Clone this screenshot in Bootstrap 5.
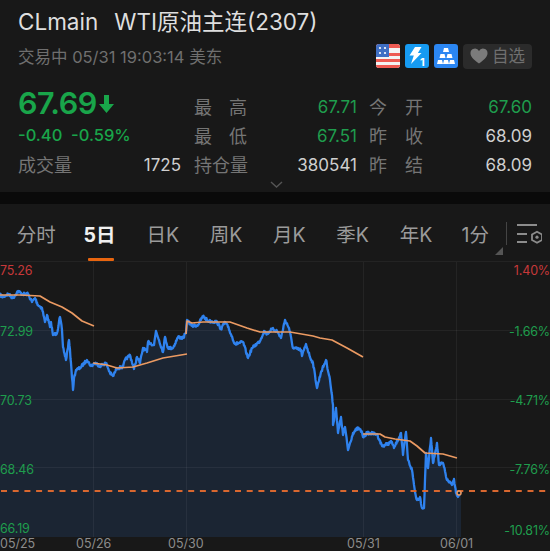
<!DOCTYPE html>
<html lang="zh">
<head>
  <meta charset="UTF-8" />
  <title>CLmain</title>
  <meta name="viewport" content="width=device-width, initial-scale=1" />
  <link href="https://cdn.jsdelivr.net/npm/bootstrap@5.3.0/dist/css/bootstrap.min.css" rel="stylesheet" />
  <style>
    body {
      font-family: Inter, "Noto Sans CJK SC", sans-serif;
      background-color: #181818;
      color: #d4d4d4;
      height: 551px;
      overflow: hidden;
    }
    .quote-head { height: 192px; padding: 0 18px; position: relative; }
    .quote-title { height: 42px; padding-top: 7px; font-size: 22.5px; line-height: 30px; color: #dedede; white-space: nowrap; }
    .quote-title .code { margin-right: 16px; }
    .quote-status { height: 30px; font-size: 16.5px; color: #6f6f6f; }
    .tag-group { gap: 5px; margin-top: -2px; }
    .tag-btn { width: 69px; height: 25px; background: #2b2b2b; border-radius: 4px; color: #6f6f6f; font-size: 16.5px; }
    .quote-grid { display: grid; grid-template-columns: 163px 13px 53px 110px 12px 54px 109px; grid-auto-rows: 29px; margin-top: 21px; font-size: 17px; align-items: center; }
    .price { font-size: 30.5px; font-weight: 600; color: #19a54a; line-height: 1; margin-top: -8px; letter-spacing: -.5px; }
    .price svg { margin-left: 2px; }
    .change { font-size: 16.5px; font-weight: 500; color: #19a54a; margin-top: -2px; }
    .lbl { color: #757575; font-size: 18px; }
    .num { text-align: right; color: #cfcfcf; }
    .up { color: #1f9d4d; }
    .expand-mark { position: absolute; left: 270px; top: 181px; }
    .band { height: 12px; background: #0a0a0a; }
    .tabs-bar { height: 58px; border-bottom: 1px solid #232323; position: relative; font-size: 19.5px; color: #9b9b9b; padding: 5px 0 0 4.500px; }
    .tab-item { width: 63.3px; text-align: center; line-height: 28px; white-space: nowrap; position: relative; }
    .tab-item.last { width: 55.500px; }
    .tab-item.on { color: #f0f0f0; font-weight: 700; }
    .tab-item.on::after { content: ""; position: absolute; left: 20px; right: 17px; top: 37px; height: 3px; background: #e8650f; border-radius: 1px; }
    .tab-corner { position: absolute; left: 495px; top: 43px; width: 0; height: 0; border-left: 8px solid transparent; border-bottom: 8px solid #555; }
    .tab-sep { width: 1px; height: 23px; background: #444; margin: -3px 0 0 3px; }
    .tab-set { margin-left: 9px; }
    .chart-wrap { position: relative; height: 275px; }
    .chart-wrap svg { display: block; }
    .axis-lbl { position: absolute; font-size: 12.5px; letter-spacing: -.15px; line-height: 16px; white-space: nowrap; }
    .axis-lbl.lft { left: 0; }
    .axis-lbl.rgt { right: 0; }
    .axis-red { color: #c7383a; }
    .axis-green { color: #1f9d4d; }
    .lvl-1 { top: 1px; }
    .lvl-2 { top: 62px; }
    .lvl-3 { top: 131px; }
    .lvl-4 { top: 200px; }
    .lvl-5 { top: 261px; }
    .axis-lbl.lft.lvl-5 { top: 258.500px; }
    .date-row { position: relative; height: 14px; }
    .date-lbl { position: absolute; top: .5px; font-size: 12.5px; color: #8c8c8c; line-height: 12px; }
    .day-1 { left: 0; }
    .day-2 { left: 76px; }
    .day-3 { left: 168px; }
    .day-4 { left: 347px; }
    .day-5 { left: 440px; }
  </style>
</head>
<body>
  <div class="quote-head">
    <div class="quote-title"><span class="code">CLmain</span>WTI原油主连(2307)</div>
    <div class="quote-status d-flex align-items-center justify-content-between">
      <span>交易中 05/31 19:03:14 美东</span>
      <div class="tag-group d-flex align-items-center">
        <svg width="24" height="24" viewBox="0 0 24 24">
          <rect width="24" height="24" rx="3" fill="#f3f3f3"/>
          <path d="M0 3a3 3 0 0 1 3-3h18a3 3 0 0 1 3 3v1H0zM0 9h24v3H0zM0 15h24v3H0zM0 21h24a3 3 0 0 1-3 3H3a3 3 0 0 1-3-3z" fill="#ee5a52"/>
          <path d="M0 3a3 3 0 0 1 3-3h10v13H0z" fill="#3f6fc4"/>
          <g fill="#fff"><circle cx="4" cy="4" r="1.1"/><circle cx="9" cy="4" r="1.1"/><circle cx="4" cy="9" r="1.1"/><circle cx="9" cy="9" r="1.1"/></g>
        </svg>
        <svg width="24" height="24" viewBox="0 0 24 24">
          <rect width="24" height="24" rx="3" fill="#169bf2"/>
          <path d="M10 3h6.500l-3.600 6H16.500L6 20l2.800-8.500H4.500z" fill="#fff"/>
          <text x="15" y="22" font-size="11" font-weight="700" fill="#fff" font-family="Inter, sans-serif">1</text>
        </svg>
        <svg width="24" height="24" viewBox="0 0 24 24">
          <rect width="24" height="24" rx="3" fill="#2b86f2"/>
          <g fill="#fff">
            <path d="M10 4h4l1 4H9z"/>
            <path d="M6.500 10h4l1 4h-6zM13.500 10h4l1 4h-6z"/>
            <path d="M4 16h4l1 4H3zM10 16h4l1 4H9zM16 16h4l1 4h-6z"/>
          </g>
        </svg>
        <div class="tag-btn d-flex align-items-center justify-content-center gap-1">
          <svg width="18" height="16" viewBox="0 0 18 16"><path d="M9 15.500C3 11 .5 8.400.5 5.200A4.500 4.500 0 0 1 9 3a4.500 4.500 0 0 1 8.500 2.200C17.500 8.400 15 11 9 15.500z" fill="#7b7b7b"/></svg>
          <span>自选</span>
        </div>
      </div>
    </div>
    <div class="quote-grid">
      <div class="price d-flex align-items-center">67.69<svg width="15" height="18" viewBox="0 0 15 18"><path d="M5 0h5v9h5l-7.500 9L0 9h5z" fill="#19a54a"/></svg></div>
      <div></div>
      <div class="lbl d-flex justify-content-between"><span>最</span><span>高</span></div>
      <div class="num up">67.71</div>
      <div></div>
      <div class="lbl d-flex justify-content-between"><span>今</span><span>开</span></div>
      <div class="num up">67.60</div>

      <div class="change">-0.40&nbsp;&nbsp;-0.59%</div>
      <div></div>
      <div class="lbl d-flex justify-content-between"><span>最</span><span>低</span></div>
      <div class="num up">67.51</div>
      <div></div>
      <div class="lbl d-flex justify-content-between"><span>昨</span><span>收</span></div>
      <div class="num">68.09</div>

      <div class="d-flex justify-content-between align-items-center"><span class="lbl">成交量</span><span class="num">1725</span></div>
      <div></div>
      <div class="lbl d-flex justify-content-between"><span>持</span><span>仓</span><span>量</span></div>
      <div class="num">380541</div>
      <div></div>
      <div class="lbl d-flex justify-content-between"><span>昨</span><span>结</span></div>
      <div class="num">68.09</div>
    </div>
    <svg class="expand-mark" width="13" height="7" viewBox="0 0 13 7"><path d="M1 1l5.500 5L12 1" fill="none" stroke="#555" stroke-width="1.400"/></svg>
  </div>

  <div class="band"></div>

  <div class="tabs-bar d-flex align-items-center">
    <span class="tab-item">分时</span>
    <span class="tab-item on">5日</span>
    <span class="tab-item">日K</span>
    <span class="tab-item">周K</span>
    <span class="tab-item">月K</span>
    <span class="tab-item">季K</span>
    <span class="tab-item">年K</span>
    <span class="tab-item last">1分</span>
    <span class="tab-corner"></span>
    <span class="tab-sep"></span>
    <svg class="tab-set" width="26" height="24" viewBox="0 0 26 24">
      <path d="M1 2h20M1 11h10M1 19h10" stroke="#8c8c8c" stroke-width="1.800" fill="none"/>
      <path d="M16 11.500l5-2.800 5 2.800v5.500l-5 2.800-5-2.800z" fill="none" stroke="#8c8c8c" stroke-width="1.800"/>
      <circle cx="21" cy="14.200" r="1.600" fill="#8c8c8c"/>
    </svg>
  </div>

  <div class="chart-wrap">
    <svg id="chart" width="550" height="275" viewBox="0 262 550 275"></svg>
    <span class="axis-lbl lft axis-red lvl-1">75.26</span>
    <span class="axis-lbl lft axis-green lvl-2">72.99</span>
    <span class="axis-lbl lft axis-green lvl-3">70.73</span>
    <span class="axis-lbl lft axis-green lvl-4">68.46</span>
    <span class="axis-lbl lft axis-green lvl-5">66.19</span>
    <span class="axis-lbl rgt axis-red lvl-1">1.40%</span>
    <span class="axis-lbl rgt axis-green lvl-2">-1.66%</span>
    <span class="axis-lbl rgt axis-green lvl-3">-4.71%</span>
    <span class="axis-lbl rgt axis-green lvl-4">-7.76%</span>
    <span class="axis-lbl rgt axis-green lvl-5">-10.81%</span>
  </div>
  <div class="date-row">
    <span class="date-lbl day-1">05/25</span>
    <span class="date-lbl day-2">05/26</span>
    <span class="date-lbl day-3">05/30</span>
    <span class="date-lbl day-4">05/31</span>
    <span class="date-lbl day-5">06/01</span>
  </div>

  <script>
    const price = [[0,295],[3,297],[8,294],[13,298],[18,291],[22,294],[28,294],[32,302],[35,298],[38,305],[42,308],[45,322],[47,315],[50,327],[51,322],[53,335],[57,333],[60,317],[62,330],[63,347],[66,360],[69,340],[71,363],[73,390],[74,378],[76,370],[80,368],[87,360],[91,366],[95,363],[100,366],[106,363],[110,373],[113,376],[117,368],[123,367],[125,360],[130,355],[134,369],[137,357],[140,363],[143,348],[147,352],[148,342],[154,345],[156,331],[159,340],[163,352],[165,337],[168,348],[173,348],[178,337],[183,338],[186,333],[187,320],[192,326],[198,325],[203,316],[208,321],[217,322],[221,329],[225,322],[228,327],[235,344],[243,342],[248,358],[252,348],[260,341],[264,331],[267,334],[272,329],[277,331],[281,338],[285,320],[289,328],[293,348],[301,350],[302,356],[306,344],[310,357],[313,363],[317,388],[321,372],[326,360],[330,380],[333,405],[333,425],[336,408],[338,433],[341,417],[343,435],[345,427],[348,450],[353,433],[358,428],[362,432],[363,437],[367,433],[377,434],[382,446],[392,442],[394,448],[401,433],[403,455],[406,432],[408,460],[412,470],[415,492],[417,500],[420,497],[422,508],[424,508],[426,453],[428,468],[431,438],[433,463],[437,443],[439,465],[443,463],[447,480],[452,485],[454,479],[456,493],[458,497],[461,493]];
    const avgLines = [
      [[0,295],[20,295],[40,296],[50,302],[62,307],[72,313],[82,321],[94,326]],
      [[93,363],[107,365],[117,368],[133,367],[147,363],[163,358],[187,354]],
      [[186,334],[187,321],[192,323],[203,322],[230,322],[247,328],[260,332],[290,332],[313,336],[320,338],[332,340],[347,348],[363,357]],
      [[363,434],[380,434],[385,437],[395,439],[410,441],[417,446],[425,453],[443,454],[457,458]]
    ];

    // small seeded jitter so the line looks like ticks, not straight segments
    let seed = 7;
    function noise() {
      seed = (seed * 16807) % 2147483647;
      return seed / 2147483647 - 0.5;
    }

    function toPath(pts) {
      return pts.map((p, i) => (i ? "L" : "M") + p[0].toFixed(1) + " " + p[1].toFixed(1)).join("");
    }

    const ticks = [];
    price.forEach((p, i) => {
      if (i) {
        const prev = price[i - 1];
        const steps = Math.floor((p[0] - prev[0]) * 2);
        for (let s = 1; s < steps; s++) {
          const k = s / steps;
          ticks.push([prev[0] + (p[0] - prev[0]) * k, prev[1] + (p[1] - prev[1]) * k + noise() * 3]);
        }
      }
      ticks.push(p);
    });

    let svg = `<path d="${toPath(ticks)}L461 537L0 537Z" fill="#1b2533"/>`;
    [330, 399, 467].forEach(y => {
      svg += `<path d="M0 ${y + .5}H550" stroke="#fff" stroke-opacity=".055"/>`;
    });
    [93, 186, 363, 456].forEach(x => {
      svg += `<path d="M${x + .5} 262V537" stroke="#fff" stroke-opacity=".055"/>`;
    });
    svg += `<path d="${toPath(ticks)}" fill="none" stroke="#2f82ee" stroke-width="2.300" stroke-linejoin="round"/>`;
    avgLines.forEach(l => {
      svg += `<path d="${toPath(l)}" fill="none" stroke="#eb9a62" stroke-width="1.700" stroke-linejoin="round"/>`;
    });
    svg += `<path d="M0 491H550" stroke="#d9672f" stroke-width="2" stroke-dasharray="6 5.700" stroke-dashoffset="-1"/>`;
    svg += `<circle cx="459" cy="493" r="2" fill="#1b2533" stroke="#eb9a62" stroke-width="1.500"/>`;
    document.getElementById("chart").innerHTML = svg;
  </script>
  <script src="https://cdn.jsdelivr.net/npm/bootstrap@5.3.0/dist/js/bootstrap.bundle.min.js"></script>
</body>
</html>
